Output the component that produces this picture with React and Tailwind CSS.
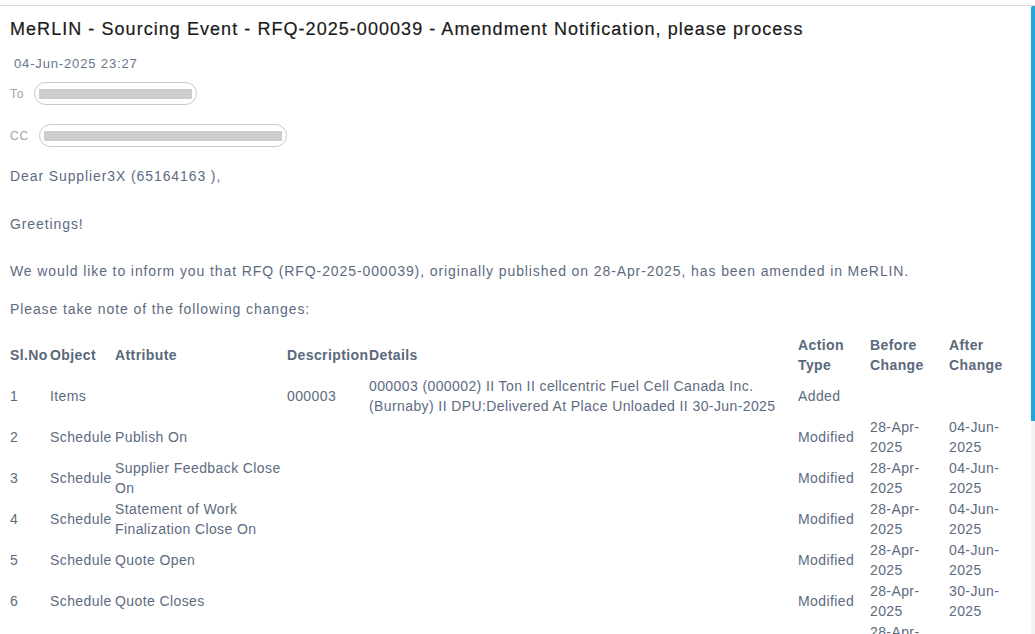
import React from "react";

const rows = [
  { no: "1", obj: "Items", attr: "", desc: "000003", details: "000003 (000002) II Ton II cellcentric Fuel Cell Canada Inc. (Burnaby) II DPU:Delivered At Place Unloaded II 30-Jun-2025", action: "Added", before: "", after: "" },
  { no: "2", obj: "Schedule", attr: "Publish On", desc: "", details: "", action: "Modified", before: "28-Apr-2025", after: "04-Jun-2025" },
  { no: "3", obj: "Schedule", attr: "Supplier Feedback Close On", desc: "", details: "", action: "Modified", before: "28-Apr-2025", after: "04-Jun-2025" },
  { no: "4", obj: "Schedule", attr: "Statement of Work Finalization Close On", desc: "", details: "", action: "Modified", before: "28-Apr-2025", after: "04-Jun-2025" },
  { no: "5", obj: "Schedule", attr: "Quote Open", desc: "", details: "", action: "Modified", before: "28-Apr-2025", after: "04-Jun-2025" },
  { no: "6", obj: "Schedule", attr: "Quote Closes", desc: "", details: "", action: "Modified", before: "28-Apr-2025", after: "30-Jun-2025" },
  { no: "7", obj: "Schedule", attr: "Quote Validity", desc: "", details: "", action: "Modified", before: "28-Apr-2025", after: "12-Jul-2025" },
];

const headers = ["Sl.No", "Object", "Attribute", "Description", "Details", "Action Type", "Before Change", "After Change"];

//pill con la direccion de correo (oculta)
function Recipient({ label, width }) {
  return (
    <div className="flex items-center gap-[10px]">
      <span className="text-[12px] text-[#a3a3a3] tracking-[0.8px]">{label}</span>
      <div className={"h-[23px] rounded-full border border-[#c9c9c9] flex items-center px-[4px] " + width}>
        <div className="h-[10px] w-full bg-[#cdcdcd] blur-[0.5px]"></div>
      </div>
    </div>
  );
}

export default function App() {
  return (
    <div className="h-[634px] w-[1035px] overflow-hidden bg-white flex flex-col font-['Liberation_Sans',Arial,sans-serif]">
      <div className="h-[5px] shrink-0"></div>
      <div className="flex flex-1 min-h-0 border-t border-[#dadada]">
        <div className="flex-1 min-w-0 overflow-hidden pl-[10px]">
          <h1 className="mt-[11px] text-[18px] leading-[24px] text-[#1a1a1a] tracking-[1.05px] [-webkit-text-stroke:0.2px_#1a1a1a]">
            MeRLIN - Sourcing Event - RFQ-2025-000039 - Amendment Notification, please process
          </h1>
          <div className="mt-[14px] ml-[4px] text-[13px] leading-[18px] text-[#66768c] tracking-[0.85px]">04-Jun-2025 23:27</div>
          <div className="mt-[9px]">
            <Recipient label="To" width="w-[163px]" />
          </div>
          <div className="mt-[19px]">
            <Recipient label="CC" width="w-[248px]" />
          </div>
          <div className="text-[14px] leading-[20px] text-[#5d6b7f] tracking-[0.9px]">
            <p className="mt-[19px]">Dear Supplier3X (65164163 ),</p>
            <p className="mt-[28px]">Greetings!</p>
            <p className="mt-[27px]">We would like to inform you that RFQ (RFQ-2025-000039), originally published on 28-Apr-2025, has been amended in MeRLIN.</p>
            <p className="mt-[18px]">Please take note of the following changes:</p>
          </div>
          <table className="mt-[15px] w-[1020px] table-fixed border-collapse text-[14px] leading-[20px] text-[#5d6b7f] tracking-[0.4px]">
            <colgroup>
              <col className="w-[40px]" />
              <col className="w-[65px]" />
              <col className="w-[172px]" />
              <col className="w-[82px]" />
              <col className="w-[429px]" />
              <col className="w-[72px]" />
              <col className="w-[79px]" />
              <col />
            </colgroup>
            <thead>
              <tr className="h-[41px]">
                {headers.map((h) => (
                  <th key={h} className="text-left align-middle font-bold text-[#5a687b] p-0 pr-[2px]">{h}</th>
                ))}
              </tr>
            </thead>
            <tbody>
              {rows.map((r) => (
                <tr key={r.no} className="h-[41px]">
                  <td className="align-middle p-0 pr-[2px]">{r.no}</td>
                  <td className="align-middle p-0">{r.obj}</td>
                  <td className="align-middle p-0 pr-[2px]">{r.attr}</td>
                  <td className="align-middle p-0 pr-[2px]">{r.desc}</td>
                  <td className="align-middle p-0 pr-[2px]">{r.details}</td>
                  <td className="align-middle p-0 pr-[2px]">{r.action}</td>
                  <td className="align-middle p-0 pr-[2px]">{r.before}</td>
                  <td className="align-middle p-0 pr-[2px]">{r.after}</td>
                </tr>
              ))}
            </tbody>
          </table>
        </div>
        {/* barra de scroll */}
        <div className="w-[4px] shrink-0 bg-[#f3f3f3] flex flex-col">
          <div className="h-[415px] bg-[#1fa6dc] rounded-tl-[2px]"></div>
        </div>
      </div>
    </div>
  );
}
